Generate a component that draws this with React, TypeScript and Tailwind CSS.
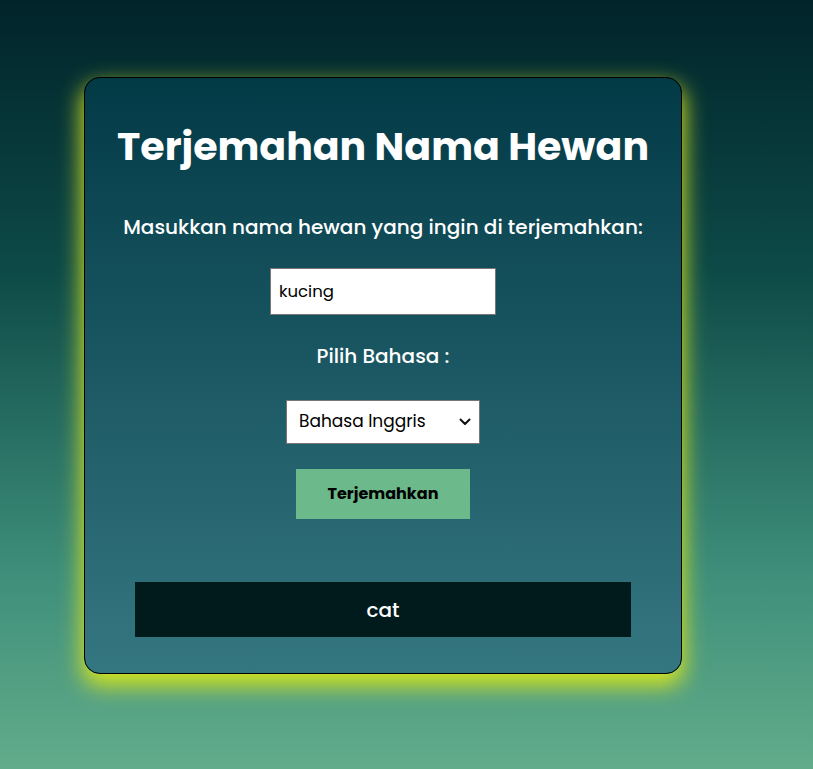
import { useState } from "react";

const font = { fontFamily: "Poppins, Inter, 'Noto Sans', sans-serif" };

function Chevron() {
  return (
    <svg width="12" height="8" viewBox="0 0 12 8" fill="none" stroke="#111" strokeWidth="2"
      strokeLinecap="round" strokeLinejoin="round" aria-hidden="true">
      <polyline points="1.5 1.5 6 6 10.5 1.5" />
    </svg>
  );
}

export default function App() {
  const [name, setName] = useState("kucing");
  const [lang, setLang] = useState("en");

  return (
    <div
      className="min-h-[769px] w-full bg-[linear-gradient(to_bottom,#01242a_0%,#0d4a47_35%,#3f8f7b_75%,#62ac8a_100%)] pt-[77px] pl-[84px]"
      style={font}
    >
      <div className="w-[598px] h-[597px] rounded-[16px] border border-black bg-[linear-gradient(to_bottom,#023a46,#357781)] shadow-[0_10px_22px_2px_#d4e41e] flex flex-col items-center">
        {/* Title */}
        <h1 className="mt-[45px] text-[39.5px] leading-[48px] font-bold text-white">
          Terjemahan Nama Hewan
        </h1>

        <label className="mt-[43px] text-[20px] leading-[27px] font-medium text-white">
          Masukkan nama hewan yang ingin di terjemahkan:
        </label>

        <input
          value={name}
          onChange={(e) => setName(e.target.value)}
          className="mt-[27px] w-[226px] h-[47px] bg-white border border-[#767676] px-2 text-[16.5px] text-black outline-none"
        />

        <p className="mt-[28px] text-[20px] leading-[27px] font-medium text-white">
          Pilih Bahasa :
        </p>

        {/* Language select */}
        <div className="relative mt-[30px] w-[194px] h-[44px]">
          <select
            value={lang}
            onChange={(e) => setLang(e.target.value)}
            className="appearance-none w-full h-full bg-white border border-[#767676] pl-3 pr-8 text-[17px] text-black outline-none"
          >
            <option value="en">Bahasa Inggris</option>
            <option value="jp">Bahasa Jepang</option>
          </select>
          <span className="pointer-events-none absolute right-[9px] top-[18px]">
            <Chevron />
          </span>
        </div>

        <button className="mt-[25px] w-[174px] h-[50px] bg-[#6cb98b] text-[16px] font-bold text-black">
          Terjemahkan
        </button>

        <div className="mt-[63px] w-[496px] h-[55px] bg-[#011a1c] flex items-center justify-center text-[20px] font-medium text-white">
          cat
        </div>
      </div>
    </div>
  );
}
